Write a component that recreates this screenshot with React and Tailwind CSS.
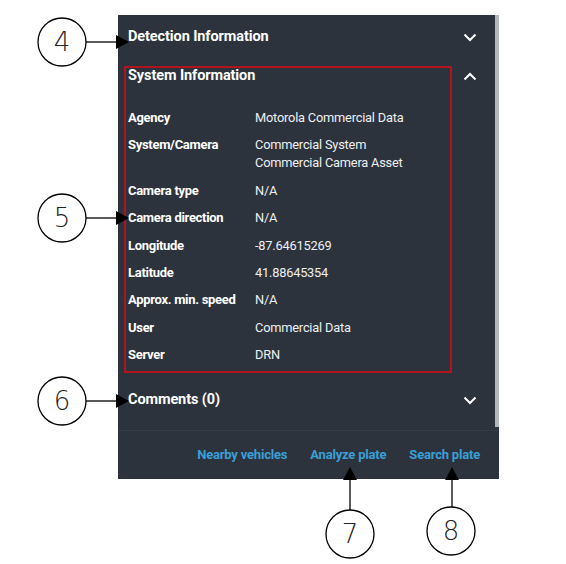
import React from "react";

const rows = [
  ["Agency", ["Motorola Commercial Data"]],
  ["System/Camera", ["Commercial System", "Commercial Camera Asset"]],
  ["Camera type", ["N/A"]],
  ["Camera direction", ["N/A"]],
  ["Longitude", ["-87.64615269"]],
  ["Latitude", ["41.88645354"]],
  ["Approx. min. speed", ["N/A"]],
  ["User", ["Commercial Data"]],
  ["Server", ["DRN"]],
];

function Chevron({ up }) {
  return (
    <svg width="14" height="9" viewBox="0 0 14 9" className="shrink-0">
      <path
        d={up ? "M1.5 7.5 L7 2 L12.5 7.5" : "M1.5 1.5 L7 7 L12.5 1.5"}
        fill="none"
        stroke="white"
        strokeWidth="2"
      />
    </svg>
  );
}

function Callout({ cx, cy, n }) {
  return (
    <g>
      <circle cx={cx} cy={cy} r="24" fill="white" stroke="black" strokeWidth="1.3" />
      <text
        x={cx}
        y={cy + 9}
        textAnchor="middle"
        fontSize="26"
        fontFamily="'DejaVu Sans', sans-serif"
        fontWeight="200"
        fill="#222"
      >
        {n}
      </text>
    </g>
  );
}

export default function App() {
  return (
    <div
      className="relative w-[566px] h-[564px] bg-white overflow-hidden"
      style={{ fontFamily: "Roboto, 'Liberation Sans', sans-serif" }}
    >
      <div className="pl-[118px] pt-[15px]">
        <div className="w-[381px] h-[464px] bg-[#2c333d] flex flex-col">
          <div className="flex h-[415px]">
            <div className="flex-1 flex flex-col">
              <div className="h-[44px] flex items-center justify-between pl-[10px] pr-[18px]">
                <span className="text-[14.5px] font-bold text-white tracking-[-0.1px]">Detection Information</span>
                <Chevron />
              </div>
              <div className="h-[34px] flex items-center justify-between pl-[10px] pr-[18px]">
                <span className="text-[14.5px] font-bold text-white tracking-[-0.1px]">System Information</span>
                <Chevron up />
              </div>
              <div className="pt-[16px] pl-[10px] flex flex-col gap-[9.4px]">
                {rows.map(([k, vals]) => (
                  <div key={k} className="flex leading-[18px]">
                    <div className="w-[127px] text-[13px] font-bold text-white tracking-[-0.3px]">{k}</div>
                    <div className="text-[12.8px] text-[#eef0f2] tracking-[-0.2px]">
                      {vals.map((v) => (
                        <div key={v}>{v}</div>
                      ))}
                    </div>
                  </div>
                ))}
              </div>
              <div className="mt-[16px] h-[40px] flex items-center justify-between pl-[10px] pr-[18px]">
                <span className="text-[14.5px] font-bold text-white tracking-[-0.1px]">Comments (0)</span>
                <Chevron />
              </div>
            </div>
            <div className="w-[4px] h-[412px] bg-[#b5b8bb]" />
          </div>
          <div className="flex-1 border-t border-[#353c47] flex items-center justify-end gap-[23px] pr-[19px] text-[13px] font-bold text-[#3a9fd6] tracking-[-0.2px]">
            <span>Nearby vehicles</span>
            <span>Analyze plate</span>
            <span>Search plate</span>
          </div>
        </div>
      </div>

      <div className="absolute left-[124px] top-[66px] w-[328px] h-[307px] border-2 border-[#b0141f] pointer-events-none" />

      <svg className="absolute left-0 top-0 pointer-events-none" width="566" height="564">
        <line x1="86" y1="42" x2="118" y2="42" stroke="black" strokeWidth="1.3" />
        <polygon points="116,35 129,42 116,49" fill="black" />
        <Callout cx={62} cy={42} n="4" />
        <line x1="86" y1="218" x2="118" y2="218" stroke="black" strokeWidth="1.3" />
        <polygon points="116,211 129,218 116,225" fill="black" />
        <Callout cx={62} cy={218} n="5" />
        <line x1="86" y1="401" x2="118" y2="401" stroke="black" strokeWidth="1.3" />
        <polygon points="116,394 129,401 116,408" fill="black" />
        <Callout cx={62} cy={401} n="6" />
        <line x1="350" y1="478" x2="350" y2="510" stroke="black" strokeWidth="1.3" />
        <polygon points="343,480 350,467 357,480" fill="black" />
        <Callout cx={350} cy={534} n="7" />
        <line x1="452" y1="478" x2="452" y2="507" stroke="black" strokeWidth="1.3" />
        <polygon points="445,480 452,467 459,480" fill="black" />
        <Callout cx={451} cy={531} n="8" />
      </svg>
    </div>
  );
}
